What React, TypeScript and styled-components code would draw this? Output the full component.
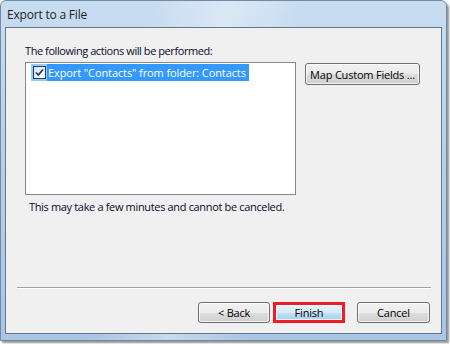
import React from "react";
import styled, { createGlobalStyle } from "styled-components";

const Global = createGlobalStyle`
  html, body { margin: 0; padding: 0; background: #ffffff; }
  body { width: 450px; height: 344px; overflow: hidden; font-family: "Open Sans", "Noto Sans", sans-serif; }
`;

const FONT = `"Open Sans", "Noto Sans", sans-serif`;

const Window = styled.div`
  box-sizing: border-box;
  width: 447px;
  height: 341px;
  padding: 0 4px 6px 4px;
  display: flex;
  flex-direction: column;
  border-radius: 6px 6px 0 0;
  border: 1px solid #6f8aa6;
  background:
    linear-gradient(100deg, rgba(255,255,255,0) 30%, rgba(255,255,255,0.35) 45%, rgba(255,255,255,0) 60%),
    linear-gradient(180deg, #c9ddf1 0%, #b9d1ea 40%, #a9c6e4 100%);
  box-shadow: 2px 2px 2px rgba(60, 60, 60, 0.55);
`;

const TitleBar = styled.div`
  height: 26px;
  display: flex;
  align-items: center;
  padding-left: 2px;
  font-family: ${FONT};
  font-size: 12px;
  color: #1e1e1e;
  letter-spacing: -0.2px;
`;

const Panel = styled.div`
  flex: 1;
  display: flex;
  flex-direction: column;
  border: 1px solid #65778a;
  background: #f0f0f0;
  font-family: ${FONT};
  font-size: 11px;
  color: #000;
`;

const Heading = styled.div`
  margin: 15px 0 0 19px;
  line-height: 16px;
  color: #0a0a2a;
  letter-spacing: -0.43px;
`;

const MainRow = styled.div`
  display: flex;
  align-items: flex-start;
  margin: 3px 0 0 19px;
`;

const ListBox = styled.div`
  box-sizing: border-box;
  width: 271px;
  height: 133px;
  border: 1px solid #828790;
  background: #ffffff;
  padding: 1px 0 0 5px;
`;

const ListItem = styled.div<{ $selected?: boolean }>`
  display: inline-flex;
  align-items: center;
  height: 17px;
  color: ${(p) => (p.$selected ? "#ffffff" : "#000")};
`;

const CheckCell = styled.span`
  display: flex;
  align-items: center;
  justify-content: center;
  width: 16px;
  height: 17px;
  background: #99c9f5;
`;

const CheckBox = styled.span`
  box-sizing: border-box;
  width: 13px;
  height: 13px;
  border: 1px solid #1d3f66;
  background: linear-gradient(135deg, #d8e4f2, #ffffff);
  display: flex;
  align-items: center;
  justify-content: center;
`;

const ItemText = styled.span`
  height: 17px;
  line-height: 17px;
  padding: 0 3px 0 1px;
  background: #3399ff;
  white-space: nowrap;
  letter-spacing: -0.1px;
`;

const SideColumn = styled.div`
  margin-left: 9px;
  padding-top: 1px;
`;

const Button = styled.button<{ $width: number; $height?: number; $focus?: boolean }>`
  box-sizing: border-box;
  width: ${(p) => p.$width}px;
  height: ${(p) => p.$height ?? 21}px;
  padding: 0;
  font-family: ${FONT};
  font-size: 11px;
  letter-spacing: -0.2px;
  color: #000;
  border-radius: ${(p) => (p.$focus ? "0" : "3px")};
  border: ${(p) => (p.$focus ? "3px solid #ee1c25" : "1px solid #707070")};
  background: ${(p) =>
    p.$focus
      ? "linear-gradient(180deg, #e6f3fb 0%, #d6ecf9 50%, #bfdff3 51%, #a9d3ee 100%)"
      : "linear-gradient(180deg, #f2f2f2 0%, #ebebeb 50%, #dddddd 51%, #cfcfcf 100%)"};
  box-shadow: inset 0 0 0 1px rgba(255, 255, 255, 0.7);
  display: flex;
  align-items: center;
  justify-content: center;
  line-height: 1;
`;

const Note = styled.div`
  margin: 4px 0 0 23px;
  line-height: 16px;
  color: #0a0a2a;
  letter-spacing: -0.34px;
`;

const Spacer = styled.div`
  flex: 1;
`;

const Separator = styled.div`
  margin: 0 10px 0 11px;
  height: 0;
  border-top: 1px solid #a0a0a0;
  border-bottom: 1px solid #ffffff;
`;

const ButtonRow = styled.div`
  display: flex;
  justify-content: flex-end;
  gap: 3px;
  margin: 13px 11px 10px 0;
`;

const CancelGap = styled.div`
  width: 6px;
`;

export default function App() {
  return (
    <>
      <Global />
      <Window>
        <TitleBar>Export to a File</TitleBar>
        <Panel>
          <Heading>The following actions will be performed:</Heading>
          <MainRow>
            <ListBox>
              <ListItem $selected>
                <CheckCell>
                  <CheckBox>
                    <svg width="9" height="9" viewBox="0 0 9 9">
                      <path d="M1 4.5 L3.4 7 L8 1.5" fill="none" stroke="#1f3b6b" strokeWidth="1.8" />
                    </svg>
                  </CheckBox>
                </CheckCell>
                <ItemText>Export "Contacts" from folder: Contacts</ItemText>
              </ListItem>
            </ListBox>
            <SideColumn>
              <Button $width={115} $height={22}>Map Custom Fields ...</Button>
            </SideColumn>
          </MainRow>
          <Note>This may take a few minutes and cannot be canceled.</Note>
          <Spacer />
          <Separator />
          <ButtonRow>
            <Button $width={72}>&lt; Back</Button>
            <Button $width={72} $focus>Finish</Button>
            <CancelGap />
            <Button $width={73}>Cancel</Button>
          </ButtonRow>
        </Panel>
      </Window>
    </>
  );
}
